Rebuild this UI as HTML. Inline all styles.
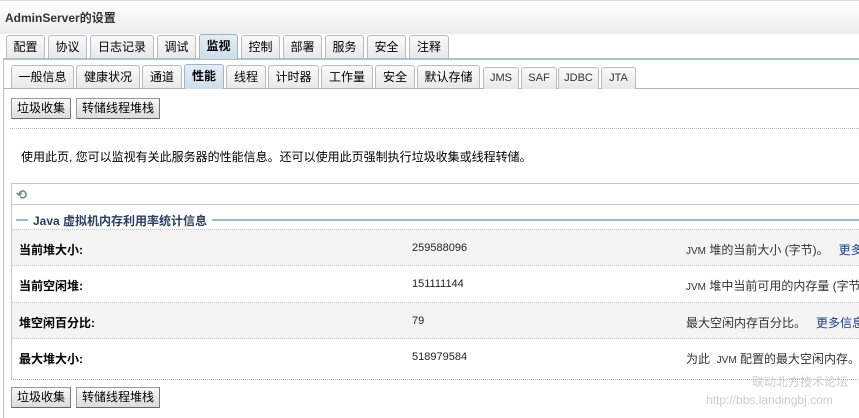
<!DOCTYPE html><html><head><meta charset="utf-8"><style>
body{margin:0;width:859px;height:418px;overflow:hidden;background:#fff;font-family:"Liberation Sans","Noto Sans CJK SC",sans-serif;font-size:12px;color:#000;position:relative}
.a{position:absolute}
.t{position:absolute;height:22px;line-height:22px;text-align:center;border:1px solid #b9bcbf;border-bottom:none;border-radius:3px 3px 0 0;background:linear-gradient(#fafafa,#e8e8e8);font-size:12px}
.act{background:linear-gradient(#e4edf5,#cfdde9);font-weight:bold;border-color:#9fb3c6}
.sm{font-size:11px;color:#333}
.b{position:absolute;height:19px;line-height:19px;padding:0 5px;border:1px solid #999;border-right-color:#777;border-bottom-color:#666;background:linear-gradient(#f8f8f8,#dcdcdc);font-size:12px}
.row{position:absolute;left:12px;width:847px;height:36px;border-top:1px dotted #c8c8c8}
.row>span{position:absolute;top:11px;white-space:nowrap}
.l{left:7px;font-weight:bold}
.row>.v{left:400px;font-size:11px;color:#222;top:12px}
.d{left:674px;color:#333}
.lk{color:#1d3f8b}
.j{font-size:10px}
</style></head><body>
<div class="a" style="left:0;top:0;width:859px;height:33px;background:linear-gradient(#fff,#ececec);border-top:1px solid #ddd"></div>
<div class="a" style="left:5px;top:9px;font-weight:bold;color:#333;font-size:12px">AdminServer的设置</div>
<div class="a" style="left:3px;top:58px;width:1px;height:360px;background:#b7c3cf"></div>
<div class="a" style="left:3px;top:58px;width:856px;height:2px;background:#b0bfcd"></div>
<div class="t" style="left:6px;top:35px;width:37px">配置</div>
<div class="t" style="left:48px;top:35px;width:37px">协议</div>
<div class="t" style="left:90px;top:35px;width:62px">日志记录</div>
<div class="t" style="left:157px;top:35px;width:37px">调试</div>
<div class="t act" style="left:199px;top:34px;width:37px;height:24px">监视</div>
<div class="t" style="left:241px;top:35px;width:37px">控制</div>
<div class="t" style="left:283px;top:35px;width:37px">部署</div>
<div class="t" style="left:325px;top:35px;width:37px">服务</div>
<div class="t" style="left:367px;top:35px;width:37px">安全</div>
<div class="t" style="left:409px;top:35px;width:38px">注释</div>
<div class="a" style="left:4px;top:88px;width:855px;height:1px;background:#aab4be"></div>
<div class="t" style="left:11px;top:65px;width:61px">一般信息</div>
<div class="t" style="left:76px;top:65px;width:62px">健康状况</div>
<div class="t" style="left:142px;top:65px;width:38px">通道</div>
<div class="t act" style="left:184px;top:64px;width:38px;height:24px">性能</div>
<div class="t" style="left:226px;top:65px;width:38px">线程</div>
<div class="t" style="left:268px;top:65px;width:49px">计时器</div>
<div class="t" style="left:321px;top:65px;width:50px">工作量</div>
<div class="t" style="left:375px;top:65px;width:38px">安全</div>
<div class="t" style="left:417px;top:65px;width:61px">默认存储</div>
<div class="t sm" style="left:483px;top:67px;width:34px;height:21px;line-height:21px">JMS</div>
<div class="t sm" style="left:521px;top:67px;width:34px;height:21px;line-height:21px">SAF</div>
<div class="t sm" style="left:558px;top:67px;width:39px;height:21px;line-height:21px">JDBC</div>
<div class="t sm" style="left:601px;top:67px;width:33px;height:21px;line-height:21px">JTA</div>
<div class="b" style="left:11px;top:98px">垃圾收集</div>
<div class="b" style="left:76px;top:98px">转储线程堆栈</div>
<div class="a" style="left:10px;top:128px;width:849px;border-top:1px dotted #bbb"></div>
<div class="a" style="left:21px;top:148px">使用此页, 您可以监视有关此服务器的性能信息。还可以使用此页强制执行垃圾收集或线程转储。</div>
<div class="a" style="left:11px;top:183px;width:848px;height:195px;border:1px solid #c6c6c6;border-right:none;border-bottom:1px dotted #aaa"></div>
<div class="a" style="left:16px;top:187px;color:#7a8a96;font-size:13px;font-weight:bold">⟲</div>
<div class="a" style="left:12px;top:204px;width:847px;height:1px;background:#ccc"></div>
<div class="a" style="left:16px;top:219px;width:843px;height:2px;background:#9fb4c8"></div>
<div class="a" style="left:28px;top:212px;background:#fff;padding:0 5px;font-weight:bold;color:#2a3f5e">Java 虚拟机内存利用率统计信息</div>
<div class="row" style="top:229px;background:#f4f4f4"><span class="l">当前堆大小:</span><span class="v">259588096</span><span class="d"><span class="j">JVM</span> 堆的当前大小 (字节)。 &nbsp;&nbsp;<span class="lk">更多信息...</span></span></div>
<div class="row" style="top:265px"><span class="l">当前空闲堆:</span><span class="v">151111144</span><span class="d"><span class="j">JVM</span> 堆中当前可用的内存量 (字节)。</span></div>
<div class="row" style="top:302px;background:#f4f4f4"><span class="l">堆空闲百分比:</span><span class="v">79</span><span class="d">最大空闲内存百分比。 &nbsp;&nbsp;<span class="lk">更多信息...</span></span></div>
<div class="row" style="top:338px"><span class="l">最大堆大小:</span><span class="v">518979584</span><span class="d">为此 &nbsp;<span class="j">JVM</span> 配置的最大空闲内存。</span></div>
<div class="b" style="left:11px;top:387px">垃圾收集</div>
<div class="b" style="left:76px;top:387px">转储线程堆栈</div>
<div class="a" style="left:752px;top:373px;color:#ccc;font-size:12px">联动北方技术论坛</div>
<div class="a" style="left:706px;top:393px;color:#ccc;font-size:12px">http://bbs.landingbj.com</div>
</body></html>
